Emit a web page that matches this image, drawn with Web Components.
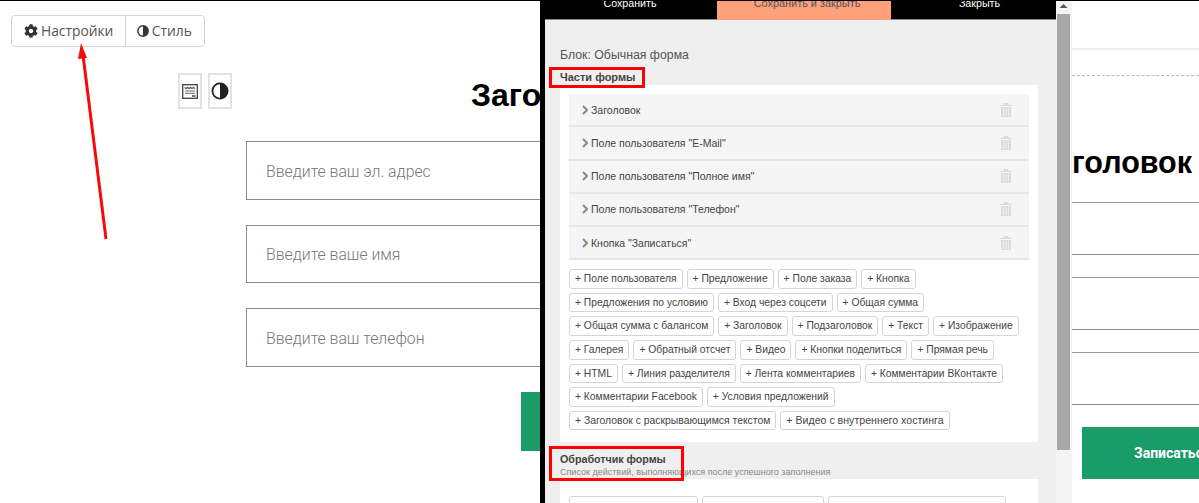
<!DOCTYPE html>
<html lang="ru">
<head>
<meta charset="utf-8">
<title>Настройки формы</title>
<style>
  html, body { margin: 0; padding: 0; background: #fff; }
  body { width: 1199px; height: 503px; overflow: hidden; font-family: "Liberation Sans", Arial, sans-serif; }
</style>
</head>
<body>
<page-shell>
  <site-left slot="left"></site-left>
  <modal-panel slot="modal">
    <part-row>Заголовок</part-row>
    <part-row>Поле пользователя "E-Mail"</part-row>
    <part-row>Поле пользователя "Полное имя"</part-row>
    <part-row>Поле пользователя "Телефон"</part-row>
    <part-row>Кнопка "Записаться"</part-row>
    <add-chip slot="chips">+ Поле пользователя</add-chip>
    <add-chip slot="chips">+ Предложение</add-chip>
    <add-chip slot="chips">+ Поле заказа</add-chip>
    <add-chip slot="chips">+ Кнопка</add-chip>
    <add-chip slot="chips">+ Предложения по условию</add-chip>
    <add-chip slot="chips">+ Вход через соцсети</add-chip>
    <add-chip slot="chips">+ Общая сумма</add-chip>
    <add-chip slot="chips">+ Общая сумма с балансом</add-chip>
    <add-chip slot="chips">+ Заголовок</add-chip>
    <add-chip slot="chips">+ Подзаголовок</add-chip>
    <add-chip slot="chips">+ Текст</add-chip>
    <add-chip slot="chips">+ Изображение</add-chip>
    <add-chip slot="chips">+ Галерея</add-chip>
    <add-chip slot="chips">+ Обратный отсчет</add-chip>
    <add-chip slot="chips">+ Видео</add-chip>
    <add-chip slot="chips">+ Кнопки поделиться</add-chip>
    <add-chip slot="chips">+ Прямая речь</add-chip>
    <add-chip slot="chips">+ HTML</add-chip>
    <add-chip slot="chips">+ Линия разделителя</add-chip>
    <add-chip slot="chips">+ Лента комментариев</add-chip>
    <add-chip slot="chips">+ Комментарии ВКонтакте</add-chip>
    <add-chip slot="chips">+ Комментарии Facebook</add-chip>
    <add-chip slot="chips">+ Условия предложений</add-chip>
    <add-chip slot="chips" style="font-size:10.4px">+ Заголовок с раскрывающимся текстом</add-chip>
    <add-chip slot="chips" style="font-size:10.6px">+ Видео с внутреннего хостинга</add-chip>
  </modal-panel>
  <site-right slot="right"></site-right>
</page-shell>

<script>
class PageShell extends HTMLElement {
  constructor () {
    super()
    this.attachShadow({ mode: 'open' }).innerHTML = `
      <style>
        :host { display: flex; width: 1199px; height: 503px; overflow: hidden; position: relative; background: #fff; }
        .top { position: absolute; left: 0; top: 0; width: 100%; height: 1px; background: #000; z-index: 3; }
      </style>
      <div class="top"></div>
      <slot name="left"></slot>
      <slot name="modal"></slot>
      <slot name="right"></slot>`
  }
}

class SiteLeft extends HTMLElement {
  constructor () {
    super()
    this.attachShadow({ mode: 'open' }).innerHTML = `
      <style>
        :host { display: block; flex: 0 0 540px; width: 540px; height: 503px; overflow: hidden; position: relative; font-family: Roboto, sans-serif; }
        .group { display: inline-flex; margin: 15px 0 0 11px; height: 32px; box-sizing: border-box; border: 1px solid #d5d5d5; border-radius: 4px; font: 13.8px/30px "Open Sans", sans-serif; color: #555; }
        .group span { display: flex; align-items: center; gap: 3px; padding: 0 11.5px 0 12px; white-space: nowrap; }
        .group span + span { border-left: 1px solid #d5d5d5; padding: 0 12px 0 11px; }
        svg { display: block; flex: none; }
        .head { display: flex; align-items: center; margin: 26px 0 0 178px; height: 36px; gap: 6px; }
        .tool { flex: none; box-sizing: border-box; width: 24px; height: 36px; border: 2px solid #e2e2e2; display: flex; align-items: center; justify-content: center; }
        h1 { margin: 7px 0 0 233px; font: bold 32px/36px "Liberation Sans", sans-serif; color: #000; white-space: nowrap; }
        .fields { margin: 32px 0 0 246px; display: flex; flex-direction: column; gap: 25px; }
        .field { width: 400px; height: 58.5px; box-sizing: border-box; border: 1.5px solid #8a8a8a; padding: 3px 0 0 19px; display: flex; align-items: center; font: 300 15.8px/20px Roboto, sans-serif; color: #777; }
        .send { width: 60px; height: 59px; margin: 25px 0 0 521px; background: #1a9c69; }
        .arrow { position: absolute; left: 60px; top: 30px; }
      </style>
      <div class="group">
        <span><svg width="14" height="14" viewBox="0 0 512 512"><path fill="#333" d="M487.4 315.7l-42.6-24.6c4.3-23.2 4.3-47 0-70.2l42.6-24.6c4.9-2.8 7.1-8.6 5.5-14-11.1-35.6-30-67.8-54.7-94.6-3.8-4.1-10-5.1-14.8-2.3L380.8 110c-17.9-15.4-38.5-27.3-60.8-35.1V25.8c0-5.6-3.9-10.5-9.4-11.7-36.7-8.2-74.3-7.8-109.2 0-5.5 1.2-9.4 6.1-9.4 11.7V75c-22.2 7.9-42.8 19.8-60.8 35.1L88.7 85.5c-4.9-2.8-11-1.9-14.8 2.3-24.7 26.7-43.6 58.9-54.7 94.6-1.7 5.4.6 11.2 5.5 14L67.3 221c-4.3 23.2-4.3 47 0 70.2l-42.6 24.6c-4.9 2.8-7.1 8.6-5.5 14 11.1 35.6 30 67.8 54.7 94.6 3.8 4.1 10 5.1 14.8 2.3l42.6-24.6c17.9 15.4 38.5 27.3 60.8 35.1v49.2c0 5.6 3.9 10.5 9.4 11.7 36.7 8.2 74.3 7.8 109.2 0 5.5-1.2 9.4-6.1 9.4-11.7v-49.2c22.2-7.9 42.8-19.8 60.8-35.1l42.6 24.6c4.9 2.8 11 1.9 14.8-2.3 24.7-26.7 43.6-58.9 54.7-94.6 1.5-5.5-.7-11.3-5.6-14.1zM256 336c-44.1 0-80-35.9-80-80s35.9-80 80-80 80 35.9 80 80-35.9 80-80 80z"/></svg>Настройки</span>
        <span><svg width="12" height="12" viewBox="0 0 12 12"><circle cx="6" cy="6" r="5.2" fill="none" stroke="#333" stroke-width="1.4"/><path fill="#333" d="M6 1a5 5 0 0 1 0 10z"/></svg>Стиль</span>
      </div>
      <div class="head">
        <div class="tool"><svg width="16" height="15" viewBox="0 0 16 15"><rect x=".7" y=".7" width="14.6" height="13.6" fill="none" stroke="#444" stroke-width="1.3"/><path stroke="#555" stroke-width="1.2" fill="none" d="M2.5 3.5l1.5 1 1.5-1 1.5 1 1.5-1 1.5 1 1.5-1 1.5 1"/><path stroke="#666" d="M3 7h10M3 9.3h10"/><path stroke="#333" stroke-width="1.3" d="M10 12h3.500"/></svg></div>
        <div class="tool"><svg width="18" height="18" viewBox="0 0 18 18"><circle cx="9" cy="9" r="7.6" fill="none" stroke="#222" stroke-width="1.8"/><path fill="#222" d="M9 1.500a7.500 7.500 0 0 1 0 15z"/></svg></div>
        <h1>Заголовок</h1>
      </div>
      <div class="fields">
        <div class="field">Введите ваш эл. адрес</div>
        <div class="field">Введите ваше имя</div>
        <div class="field">Введите ваш телефон</div>
      </div>
      <div class="send"></div>
      <svg class="arrow" width="60" height="220" viewBox="60 30 60 220">
        <path d="M106 239 L83 55" stroke="#f50a0a" stroke-width="3" fill="none"/>
        <path d="M81 43 L87 58 L78 59 Z" fill="#f50a0a"/>
      </svg>`
  }
}

class ModalPanel extends HTMLElement {
  constructor () {
    super()
    this.attachShadow({ mode: 'open' }).innerHTML = `
      <style>
        :host { display: flex; flex: 0 0 532px; width: 532px; height: 503px; box-sizing: border-box; border-left: 5px solid #000; overflow: hidden; font-family: "Liberation Sans", sans-serif; color: #444; }
        .main { flex: 0 0 511px; width: 511px; height: 503px; background: #efefef; position: relative; overflow: hidden; }
        .tabs { display: flex; height: 19px; background: #000; font-size: 10.7px; line-height: 13px; border-bottom: 1px solid #888; }
        .tabs div { box-sizing: border-box; text-align: center; color: #fff; margin-top: -3px; }
        .tabs .save { flex: 0 0 172px; padding-right: 2px; }
        .tabs .orange { flex: 0 0 174px; background: #ffa07a; color: #555; height: 23px; padding-left: 6px; font-size: 10.9px; }
        .tabs .close { flex: 0 0 165px; padding-left: 12px; }
        .title { margin: 27px 0 0 15px; font-size: 12.3px; line-height: 16px; color: #555; }
        .part { margin: 7px 0 0 15px; font-size: 11px; font-weight: bold; line-height: 14px; height: 15px; color: #444; }
        .panel { margin: 0 18px 0 15px; background: #fff; padding: 9px 9px 12px; }
        .rows { margin-bottom: 9px; }
        .chips { display: flex; flex-wrap: wrap; gap: 4px; }
        .handler { margin-left: 15px; height: 37px; box-sizing: border-box; padding-top: 10px; }
        .handler b { display: block; font-size: 10.7px; line-height: 14px; color: #444; }
        .handler small { display: block; font-size: 9px; line-height: 12px; color: #888; }
        .panel.last { padding: 17px 9px 0; height: 30px; box-sizing: border-box; }
        .last .chips { flex-wrap: nowrap; }
        .blank { display: block; box-sizing: border-box; height: 20px; border: 1px solid #d5d5d5; border-radius: 3px; background: #fff; }
        .mark { position: absolute; box-sizing: border-box; border: 3px solid #f00; }
        .scroll { flex: 0 0 16px; width: 16px; height: 503px; background: #f3f3f3; box-sizing: border-box; padding: 0 2px 0 1px; }
        .scroll svg { display: block; margin: 3px auto 0; }
        .thumb { height: 436px; margin-top: 5px; background: #a8a8a8; }
      </style>
      <div class="main">
        <div class="tabs">
          <div class="save">Сохранить</div>
          <div class="orange">Сохранить и закрыть</div>
          <div class="close">Закрыть</div>
        </div>
        <div class="title">Блок: Обычная форма</div>
        <div class="part">Части формы</div>
        <div class="panel">
          <div class="rows"><slot></slot></div>
          <div class="chips"><slot name="chips"></slot></div>
        </div>
        <div class="handler">
          <b>Обработчик формы</b>
          <small>Список действий, выполняющихся после успешного заполнения</small>
        </div>
        <div class="panel last">
          <div class="chips">
            <span class="blank" style="width:129px"></span>
            <span class="blank" style="width:122px"></span>
            <span class="blank" style="width:178px"></span>
          </div>
        </div>
        <div class="mark" style="left:4px;top:67px;width:96px;height:21px"></div>
        <div class="mark" style="left:4px;top:446px;width:135px;height:35px"></div>
      </div>
      <div class="scroll">
        <svg width="9" height="6" viewBox="0 0 9 6"><path d="M4.500 1L8.500 5H.5z" fill="#555"/></svg>
        <div class="thumb"></div>
      </div>`
  }
}

class PartRow extends HTMLElement {
  constructor () {
    super()
    this.attachShadow({ mode: 'open' }).innerHTML = `
      <style>
        :host { display: flex; align-items: center; box-sizing: border-box; height: 33.25px; background: #f5f5f5; border-bottom: 2px solid #e6e6e6; padding: 0 17px 0 13px; font-size: 10.5px; color: #444; }
        .text { flex: 1; margin-left: 3px; white-space: nowrap; }
        svg { display: block; flex: none; }
      </style>
      <svg width="6" height="10" viewBox="0 0 6 10"><path d="M1 1l4 4-4 4" fill="none" stroke="#888" stroke-width="2"/></svg>
      <span class="text"><slot></slot></span>
      <svg width="12" height="14" viewBox="0 0 12 14"><path fill="#dcdcdc" d="M4 0h4l1 2h3v1H0V2h3zM1 4h10v10H1z"/><path stroke="#f0f0f0" d="M3.500 5v8M6 5v8M8.500 5v8"/></svg>`
  }
}

class AddChip extends HTMLElement {
  constructor () {
    super()
    this.attachShadow({ mode: 'open' }).innerHTML = `
      <style>
        :host { display: block; box-sizing: border-box; height: 19.6px; padding: 0 5px; border: 1px solid #d5d5d5; border-radius: 3px; background: #fff; font-size: 10.3px; line-height: 17.6px; color: #444; white-space: nowrap; }
      </style>
      <slot></slot>`
  }
}

class SiteRight extends HTMLElement {
  constructor () {
    super()
    this.attachShadow({ mode: 'open' }).innerHTML = `
      <style>
        :host { display: block; flex: 0 0 127px; width: 127px; height: 503px; overflow: hidden; font-family: Roboto, sans-serif; }
        .bar { margin-top: 48px; height: 2px; background: #eee; }
        .dash { margin-top: 25px; border-top: 1px dashed #bbb; }
        h1 { margin: 68px 0 0 0; font: bold 30.5px/36px "Liberation Sans", sans-serif; color: #000; white-space: nowrap; }
        .fields { margin-top: 22px; display: flex; flex-direction: column; gap: 22px; }
        .field { height: 53px; box-sizing: border-box; border-top: 1px solid #999; border-bottom: 1px solid #888; }
        .send { margin: 22px 0 0 10px; width: 200px; height: 52px; box-sizing: border-box; padding-left: 52px; background: #1a9c69; color: #fff; font: bold 14px/52px Roboto, sans-serif; white-space: nowrap; }
      </style>
      <div class="bar"></div>
      <div class="dash"></div>
      <h1>головок</h1>
      <div class="fields">
        <div class="field"></div>
        <div class="field"></div>
        <div class="field"></div>
      </div>
      <div class="send">Записаться</div>`
  }
}

customElements.define('page-shell', PageShell)
customElements.define('site-left', SiteLeft)
customElements.define('modal-panel', ModalPanel)
customElements.define('part-row', PartRow)
customElements.define('add-chip', AddChip)
customElements.define('site-right', SiteRight)
</script>
</body>
</html>
